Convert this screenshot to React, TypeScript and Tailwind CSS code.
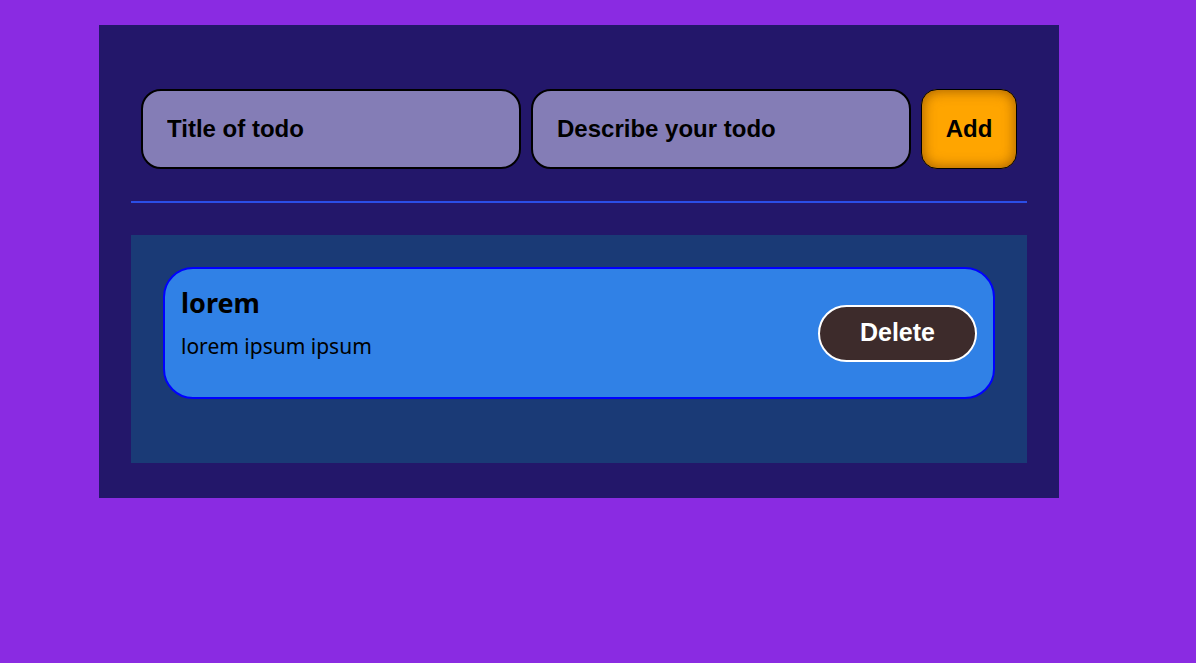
const todos = [{ id: 1, title: "lorem", description: "lorem ipsum ipsum" }]

const inputClass =
    "w-[380px] h-[80px] rounded-[20px] border-2 border-black bg-[#847db6] px-6 text-[24px] font-bold text-black placeholder:text-black outline-none"

const App = () => {
    return (
        <div className="min-h-screen w-full bg-[#8a2be2] pt-[25px] pl-[99px]" style={{ fontFamily: "'Liberation Sans', Arial, sans-serif" }}>
            <div className="w-[960px] bg-[#23176a] px-8 pt-8 pb-[35px]">
                <form className="flex gap-[10px] px-[10px] pt-8" onSubmit={(e) => e.preventDefault()}>
                    <input className={inputClass} type="text" placeholder="Title of todo" />
                    <input className={inputClass} type="text" placeholder="Describe your todo" />
                    <button className="w-[96px] h-[80px] rounded-[16px] border border-black bg-[#ffa500] text-[24px] font-bold text-black shadow-[inset_0_0_14px_rgba(110,55,0,0.7)]">Add</button>
                </form>
                <div className="mt-8 h-[2px] bg-[#2b4ee6]"></div>
                <div className="mt-8 bg-[#1a3a76] px-8 pt-8 pb-16">
                    {todos.map((todo) => (
                        <div key={todo.id} className="flex h-[132px] items-center justify-between rounded-[30px] border-2 border-[#0000ff] bg-[#3081e6] pl-4 pr-4">
                            <div className="flex flex-col self-start pt-[17px] text-black" style={{ fontFamily: "'Noto Sans', sans-serif" }}>
                                <h2 className="text-[27px] font-bold leading-[34px]">{todo.title}</h2>
                                <p className="mt-[12px] text-[21px] leading-[28px]">{todo.description}</p>
                            </div>
                            <button className="w-[159px] h-[57px] rounded-full border-2 border-white bg-[#3d2b2b] text-[25px] font-bold text-white">Delete</button>
                        </div>
                    ))}
                </div>
            </div>
        </div>
    )
}

export default App
